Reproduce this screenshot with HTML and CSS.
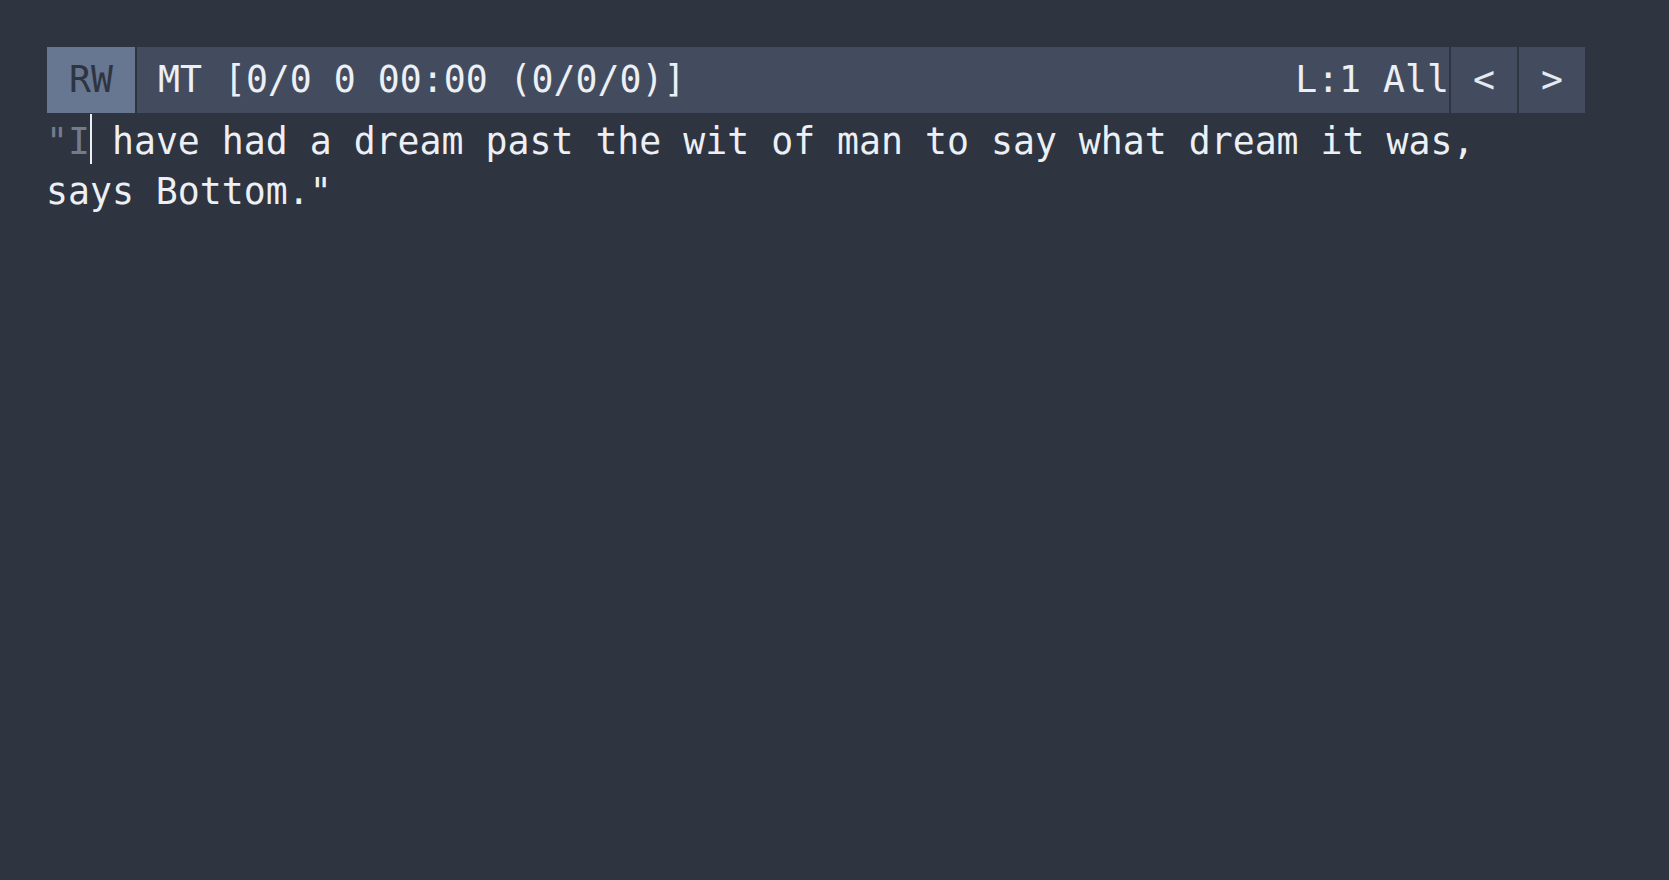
FILE: index.html
```html
<!DOCTYPE html>
<html>
<head>
<meta charset="utf-8">
<link rel="stylesheet" href="styles.css">
</head>
<body>
<div class="editor">
  <div class="modeline">
    <div class="seg mode">RW</div>
    <div class="seg main">
      <span class="info">MT [0/0 0 00:00 (0/0/0)]</span>
      <span class="pos">L:1 All</span>
    </div>
    <div class="seg btn">&lt;</div>
    <div class="seg btn">&gt;</div>
  </div>
  <div class="buffer">
    <div class="line"><span class="dim">"I</span><span class="cursor"> </span>have had a dream past the wit of man to say what dream it was,</div>
    <div class="line">says Bottom."</div>
  </div>
</div>
</body>
</html>
```

FILE: styles.css
```css
html, body {
  margin: 0;
  padding: 0;
  background: #2e3440;
}
body {
  padding: 47px 0 0 46px;
  font-family: "DejaVu Sans Mono", "Liberation Mono", monospace;
  font-size: 36.5px;
  color: #eceff4;
}
.editor {
  width: 1540px;
}
.modeline {
  display: flex;
  gap: 2px;
  height: 66px;
  line-height: 66px;
  margin-left: 1px;
  width: 1538px;
}
.seg {
  background: #434c5e;
  white-space: pre;
}
.mode {
  width: 88px;
  background: #677691;
  color: #2e3440;
  text-align: center;
}
.main {
  flex: 1;
  display: flex;
  justify-content: space-between;
  padding-left: 21px;
  color: #eceff4;
}
.btn {
  width: 66px;
  text-align: center;
  color: #e5e9f0;
}
.buffer {
  padding-top: 4px;
  line-height: 50px;
}
.line {
  white-space: pre;
  height: 50px;
}
.dim {
  color: #737b8c;
}
.cursor {
  position: relative;
}
.cursor::before {
  content: "";
  position: absolute;
  left: 0;
  top: -6px;
  width: 2px;
  height: 50px;
  background: #eceff4;
}
```
